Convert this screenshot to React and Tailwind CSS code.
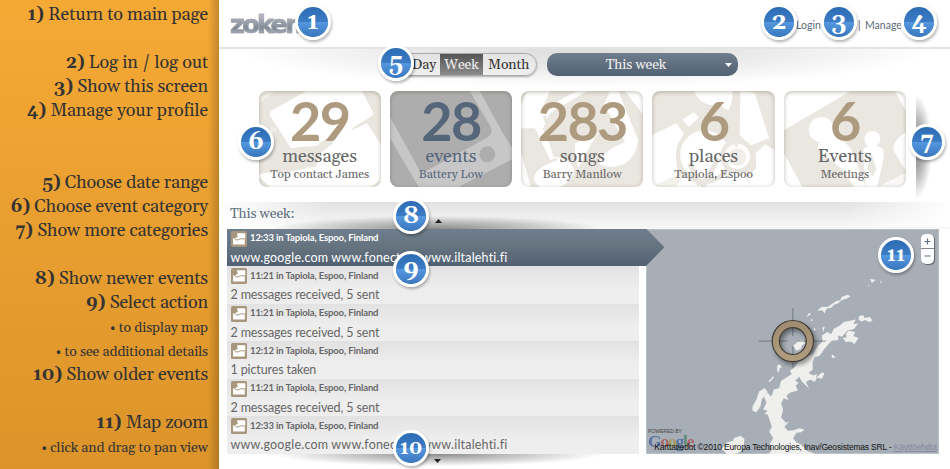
import React from 'react';

const serif = "font-['Gelasio','Georgia','Liberation_Serif',serif]";
const sans = "font-['Lato','Open_Sans',sans-serif]";

const help = [
  ['1)', 'Return to main page'],
  null,
  ['2)', 'Log in / log out'],
  ['3)', 'Show this screen'],
  ['4)', 'Manage your profile'],
  null,
  null,
  ['5)', 'Choose date range'],
  ['6)', 'Choose event category'],
  ['7)', 'Show more categories'],
  null,
  ['8)', 'Show newer events'],
  ['9)', 'Select action'],
  ['•', 'to display map'],
  ['•', 'to see additional details'],
  ['10)', 'Show older events'],
  null,
  ['11)', 'Map zoom'],
  ['•', 'click and drag to pan view'],
];

function Sidebar() {
  return (
    <aside className="h-full w-[219px] shrink-0 bg-linear-to-b from-[#f5a935] to-[#dc942a]">
      <div className="flex h-full flex-col bg-linear-to-l from-black/20 via-transparent via-[5%] to-transparent pt-[3px] pr-[11px] text-right text-[#333]">
        {help.map((h, i) => (
          <div key={i} className="h-6 whitespace-nowrap leading-6">
            {h && h[0] === '•' && <span className="text-[14px] tracking-[-0.1px]">• {h[1]}</span>}
            {h && h[0] !== '•' && (
              <span className="text-[18px] tracking-[-0.16px]">
                <b>{h[0]}</b> {h[1]}
              </span>
            )}
          </div>
        ))}
      </div>
    </aside>
  );
}

function MessagesArt() {
  return (
    <svg className="absolute inset-0 h-full w-full" viewBox="116 18 367 288" preserveAspectRatio="none">
      <rect x="116" y="18" width="367" height="288" fill="#e9e6df" />
      <path d="M152 78 258 18H424L458 80Q461 90 450 96L400 126Q385 150 350 156L310 180 275 184 240 186 212 190 150 94Q146 86 152 78ZM116 268Q150 258 200 262L258 250 262 220 300 200 322 172 348 156 440 115 483 180V306H116Z" fill="#fff" />
      <path d="M256 248 262 215 300 172 350 148 335 178 305 200 286 246ZM483 284 450 306H483ZM116 276 150 306H116Z" fill="#e9e6df" />
      <path d="M116 18H165L116 55Z" fill="#f3f1ec" />
      <path d="M116 185 155 125 168 130 116 230Z" fill="#f4f2ee" opacity=".7" />
    </svg>
  );
}

function PhoneArt() {
  return (
    <svg className="absolute inset-0 h-full w-full" viewBox="510 18 366 288" preserveAspectRatio="none">
      <rect x="510" y="18" width="366" height="288" fill="#adadad" />
      <path d="M510 96 596 252Q604 264 618 258L800 158Q820 146 810 124L748 18H778L846 142 876 190V222L715 306H596L510 160Z" fill="#c7c7c7" />
      <circle cx="801" cy="208" r="24" fill="#adadad" />
    </svg>
  );
}

function SongsArt() {
  return (
    <svg className="absolute inset-0 h-full w-full" viewBox="33 18 367 288" preserveAspectRatio="none">
      <rect x="33" y="18" width="367" height="288" fill="#eae7e0" />
      <path d="M50 18H120L95 75 200 18H232L120 85 98 132 135 215 160 222Q200 240 190 270 180 290 150 306H90Q60 290 78 262 92 238 122 228L75 130H33V60ZM300 18H325L384 165Q380 215 345 235 300 256 268 238 270 200 345 172L282 60ZM345 18H400V90ZM33 200 62 306H33Z" fill="#fff" />
      <path d="M140 222Q90 238 74 262 58 288 84 306" fill="none" stroke="#eae7e0" strokeWidth="8" />
      <path d="M104 92 134 215" stroke="#eae7e0" strokeWidth="9" />
      <path d="M195 175 265 140 225 210 205 248 195 215Z" fill="#fff" />
    </svg>
  );
}

function PlacesArt() {
  return (
    <svg className="absolute inset-0 h-full w-full" viewBox="427 18 367 288" preserveAspectRatio="none">
      <rect x="427" y="18" width="367" height="288" fill="#eae7e0" />
      <g fill="#fff">
        <path d="M553 18Q566 52 600 60L642 65 680 168 652 82Q672 50 668 18ZM692 18 735 23 778 160 722 182 690 150ZM427 150 500 115 522 145 498 215 505 270 427 306ZM518 104 552 82 568 96 538 126ZM738 204 766 178 794 195V306H720L712 276 740 250ZM508 285 550 262 575 306H495Z" />
        <path d="M640 240Q665 262 700 252L720 306H580L600 265Z" />
      </g>
      <circle cx="585" cy="210" r="80" fill="#fff" stroke="#eae7e0" strokeWidth="13" />
      <path d="M540 235 570 300M625 220 580 306" stroke="#eae7e0" strokeWidth="15" />
      <circle cx="683" cy="214" r="45" fill="#fff" stroke="#eae7e0" strokeWidth="14" />
      <path d="M648 72 681 184" stroke="#eae7e0" strokeWidth="9" />
      <circle cx="683" cy="216" r="26" fill="#f1eee9" />
      <path d="M427 306 520 268 500 306Z" fill="#f4f2ed" />
    </svg>
  );
}

function PeopleArt() {
  return (
    <svg className="absolute inset-0 h-full w-full" viewBox="100 18 367 288" preserveAspectRatio="none">
      <rect x="100" y="18" width="367" height="288" fill="#eae7e0" />
      <g fill="#fff">
        <path d="M100 18H300L100 136ZM432 18H467V80ZM100 205 155 306H100ZM467 140Q425 165 428 195L467 260Z" />
        <circle cx="212" cy="134" r="38" />
        <path d="M205 175 250 140 300 190 345 306 305 280 200 190Z" />
        <circle cx="365" cy="162" r="24" />
        <path d="M338 192Q365 170 396 192 404 210 392 250L380 306H345L340 250Z" />
        <path d="M280 260 350 306H310Z" />
        <path d="M380 306 467 262V306Z" opacity=".7" />
      </g>
      <path d="M362 205 350 250 366 275 377 252Z" fill="#eae7e0" />
    </svg>
  );
}

const cards = [
  { n: '29', label: 'messages', sub: 'Top contact James', Art: MessagesArt },
  { n: '28', label: 'events', sub: 'Battery Low', Art: PhoneArt, active: true },
  { n: '283', label: 'songs', sub: 'Barry Manilow', Art: SongsArt },
  { n: '6', label: 'places', sub: 'Tapiola, Espoo', Art: PlacesArt },
  { n: '6', label: 'Events', sub: 'Meetings', Art: PeopleArt },
];

function Card({ n, label, sub, Art, active }) {
  return (
    <div className="relative h-24 w-[122.4px] overflow-hidden rounded-lg">
      <Art />
      <div className="absolute inset-0 rounded-lg shadow-[inset_0_1px_4px_rgba(90,80,60,0.4)]" />
      <div className={'relative flex flex-col items-center whitespace-nowrap ' + (active ? 'text-[#56667a]' : 'text-[#666]')}>
        <div className={'mt-[2px] h-[54px] text-[54px] leading-[55px] font-bold tracking-[-1.6px] ' + sans + (active ? '' : ' text-[#ae9a7e]')}>{n}</div>
        <div className="h-5 text-[18px] leading-5">{label}</div>
        <div className="h-4 text-[12px] leading-[15px]">{sub}</div>
      </div>
    </div>
  );
}

const wide = 'tracking-[0.2px]';
const tight = 'tracking-[-0.12px]';

const rows = [
  ['12:33', 'www.google.com www.fonecta.fi www.iltalehti.fi', wide],
  ['11:21', '2 messages received, 5 sent', tight],
  ['11:21', '2 messages received, 5 sent', tight],
  ['12:12', '1 pictures taken', tight],
  ['11:21', '2 messages received, 5 sent', tight],
  ['12:33', 'www.google.com www.fonecta.fi www.iltalehti.fi', wide],
];

function EnvelopeIcon() {
  return (
    <svg className="h-4 w-4 shrink-0" viewBox="0 0 16 16">
      <rect width="16" height="16" rx="1.5" fill="#a8977c" />
      <path d="M6 2.200h8.300V8H13.800V13.500H2V7H4.500L6.500 5.500Z" fill="#fff" />
      <path d="M2.500 6.800 6 9.200 9.500 7.800H13.800M5.200 3 6.300 6.300" stroke="#a8977c" strokeWidth="1" fill="none" />
    </svg>
  );
}

function Row({ time, text, spacing, selected }) {
  return (
    <div className={'h-[37.5px] pl-1 whitespace-nowrap ' + sans + (selected ? ' w-[438px] bg-linear-to-b from-[#6f7e8d] via-[#65737f] via-50% to-[#526173] text-white [clip-path:polygon(0_0,419.500px_0,100%_50%,419.500px_100%,0_100%)]' : ' w-[412.5px] bg-linear-to-b from-[#e3e2e3] to-[#eee] to-60% text-[#666]')}>
      <div className="flex h-[19px] items-center gap-[3.500px] pt-px">
        <EnvelopeIcon />
        <span className="pb-px text-[9.500px] leading-4 font-bold tracking-[-0.13px]">{time} in Tapiola, Espoo, Finland</span>
      </div>
      <div className={'h-[18px] text-[12.500px] leading-[19px] ' + spacing}>{text}</div>
    </div>
  );
}

function MapPanel() {
  return (
    <div className="relative h-[225.5px] w-[293px] overflow-hidden bg-[#a7aeb6] shadow-[inset_0_0_0_1px_#b8c1c5]">
      <svg className="absolute inset-0 h-full w-full" viewBox="19 25 878 676" preserveAspectRatio="none">
        <defs>
          <filter id="ringShadow" x="-30%" y="-30%" width="170%" height="170%">
            <feDropShadow dx="7" dy="9" stdDeviation="6" floodOpacity=".4" />
          </filter>
          <linearGradient id="ring" x2="0" y2="1">
            <stop stopColor="#a08c70" />
            <stop offset="1" stopColor="#b09c7d" />
          </linearGradient>
        </defs>
        <g fill="#efefed">
          <path d="M648 296 640 310 655 308 642 325 622 330 606 348 594 344 596 358 575 360 552 386 540 404 524 410 518 426 519 446 506 456 520 464 532 460 528 472 545 456 554 457 546 474 532 470 524 484 512 476 498 484 508 503 486 482 478 468 466 480 476 486 468 495 474 509 450 516 440 524 446 538 432 532 424 548 430 566 424 590 438 606 448 602 434 618 444 630 462 628 478 622 494 626 484 634 470 636 460 652 470 665 485 672 500 690 524 698 522 700H386L398 686 390 668 400 652 388 632 396 618 390 600 384 582 374 578 384 570 370 566 380 546 372 526 384 516 394 530 402 506 418 502 424 480 440 470 456 460 450 450 464 440 474 426 520 398 534 376 548 362 546 344 562 334 574 340 582 324 600 314 612 304Z" />
          <path d="M374 502 358 512 350 536 338 558 338 570 350 574 362 556 366 535 384 514ZM658 286 670 283 674 292 690 289 698 300 686 304 676 298 664 302 656 296ZM618 338 626 330 646 334 640 346 656 352 644 370 632 362 618 364 608 352 620 350ZM532 269 546 258 562 259 576 250 590 240 600 239 606 228 624 222 632 227 618 235 606 238 594 248 582 252 576 260 560 264 554 278 548 269ZM500 288 508 276 514 281ZM514 294 520 298 514 302ZM690 175 708 177 702 182 696 187ZM720 180 725 183 724 190ZM684 194 688 192 688 198ZM574 403 580 402 586 412 578 412ZM412 434 420 431 426 440 420 442 416 456 412 450ZM400 466 402 470 390 484 386 482ZM547 320 555 318 550 334ZM522 320 528 326 522 330ZM460 376 476 360 492 358 496 368 486 374 484 384 470 390ZM392 522 400 530 392 536ZM262 665 280 660 282 652 302 645 314 654 312 675 306 690 286 700H262L246 684Z" />
        </g>
        <path d="M459 262V346M459 376V440M357 361H443M474 361H558" stroke="#525a61" strokeWidth="2.500" opacity=".75" />
        <g filter="url(#ringShadow)">
          <circle cx="459" cy="361" r="51" fill="none" stroke="#3f3b35" strokeWidth="25" />
          <circle cx="459" cy="361" r="51" fill="none" stroke="url(#ring)" strokeWidth="18" />
        </g>
      </svg>
      <div className="relative flex h-full flex-col justify-between">
        <div className="mt-[5px] mr-[5px] flex h-[30px] w-[13px] flex-col self-end overflow-hidden rounded-[5px] bg-white shadow-[1px_1px_1px_#666]">
          <svg viewBox="0 0 13 30" className="h-[30px] w-[13px]">
            <path d="M3.500 7.500h6M6.500 4.500v6M3.500 22h6" stroke="#607080" strokeWidth="1.200" />
            <path d="M0 14.500h13" stroke="#888" />
          </svg>
        </div>
        <div className="relative h-[25px] pl-[2px]">
          <div className="font-['Liberation_Sans',sans-serif] text-[5px] leading-[5px] text-[#444]">POWERED BY</div>
          <div className="font-['Liberation_Serif',serif] text-[17.500px] leading-[14px] font-bold tracking-[-1.2px] opacity-80">
            <span className="text-[#45659d]">G</span><span className="text-[#a95656]">o</span><span className="text-[#a39444]">o</span><span className="text-[#45659d]">g</span><span className="text-[#4d8065]">l</span><span className="text-[#a95656]">e</span>
          </div>
          <div className="absolute right-[2px] bottom-0 font-['Liberation_Sans',sans-serif] text-[8.500px] leading-[13px] tracking-[-0.19px] whitespace-nowrap text-[#111]">
            Karttatiedot ©2010 Europa Technologies, Inav/Geosistemas SRL - <span className="text-[#8787a0] underline">Käyttöehdot</span>
          </div>
        </div>
      </div>
    </div>
  );
}

const badges = [
  ['1', 'left-[295px] top-[4px]'],
  ['2', 'left-[761px] top-[4px]'],
  ['3', 'left-[821px] top-[4px]'],
  ['4', 'left-[901px] top-[4px]'],
  ['5', 'left-[378px] top-[45px]'],
  ['6', 'left-[238px] top-[124px]'],
  ['7', 'left-[909px] top-[124px]'],
  ['8', 'left-[393px] top-[198px]'],
  ['9', 'left-[393px] top-[251px]'],
  ['10', 'left-[393px] top-[430px]'],
  ['11', 'left-[878px] top-[237px]'],
];

export default function App() {
  return (
    <div className={'relative flex h-[469px] w-[950px] overflow-hidden bg-white ' + serif}>
      <Sidebar />
      <main className="flex w-[731px] flex-col">
        <header className="flex h-[49px] justify-between border-b-2 border-[#e4e4e4]">
          <div className="ml-[11px] bg-linear-to-b from-[#bcc0c8] from-30% via-[#818996] via-60% to-[#b5bac4] to-75% bg-clip-text pt-[6px] font-['DejaVu_Sans',sans-serif] text-[25.500px] leading-[36px] font-bold tracking-[-2.700px] text-transparent [-webkit-text-stroke:0.600px_#959ca8]">zoken</div>
          <nav className={'mr-[48px] flex pt-[17px] text-[10.500px] leading-4 text-[#5c6b7b] ' + sans}>
            <span className="w-[62px]">Login</span>
            <span className="w-[7px]">|</span>
            <span className="w-[37px]">Manage</span>
          </nav>
        </header>
        <div className="flex h-[42px] bg-[radial-gradient(ellipse_350px_38px_at_50%_0,#dedede_0%,#e6e6e6_40%,#fff_100%)] pt-1">
          <div className="ml-[175px] flex h-[23px] w-[143px] overflow-hidden rounded-full border border-[#aaa] bg-linear-to-b from-[#e3e3e3] to-[#f0f0f0] text-[14px] leading-[22px] tracking-[-0.1px] text-[#333] shadow-[0_1px_2px_rgba(0,0,0,0.3)]">
            <span className="w-[45px] pr-[4px] text-right">Day</span>
            <span className="w-[43px] bg-linear-to-b from-[#555] to-[#8c8c8c] text-center text-[#eee]">Week</span>
            <span className="flex-1 pl-[5px]">Month</span>
          </div>
          <div className="ml-[10px] flex h-[23px] w-[191px] items-center rounded-[10px] bg-linear-to-b from-[#6f7e8d] to-[#526173] pr-[6px] text-[14px] tracking-[-0.15px] text-[#eee]">
            <span className="flex-1 pt-px text-center">This week</span>
            <svg className="h-1 w-[7px]" viewBox="0 0 7 4"><path d="M0 0h7L3.500 4Z" fill="#fff" /></svg>
          </div>
        </div>
        <div className="flex h-[111px] pl-[39.500px]">
          <div className="flex gap-[8.900px]">
            {cards.map((c, i) => <Card key={i} {...c} />)}
          </div>
          <div className="mt-1 ml-[10px] h-[104px] w-5 bg-[radial-gradient(ellipse_16px_52px_at_0_50%,#777_0%,#bbb_55%,#fff_100%)]" />
        </div>
        <div className="flex h-[26.500px] bg-linear-to-b from-[#e2e2e2] to-[#f8f8f8]">
          <div className="flex w-full bg-linear-to-r from-white via-transparent via-15% to-transparent">
            <div className="w-full bg-[radial-gradient(ellipse_165px_13px_at_218px_100%,rgba(110,110,110,0.8),rgba(110,110,110,0.35)_60%,transparent)] pl-[11px] text-[14px] leading-[25px] tracking-[-0.15px] text-[#607080]">
              <div className="flex w-full bg-linear-to-l from-white to-transparent to-15%">
                <span className="w-[64px] whitespace-nowrap">This week:</span>
                <svg className="mt-[17px] ml-[141px] h-1 w-[7px]" viewBox="0 0 7 4"><path d="M0 4h7L3.500 0Z" fill="#222" /></svg>
              </div>
            </div>
          </div>
        </div>
        <div className="flex h-[225.500px] pl-[7.500px]">
          <div className="relative z-10 w-[412.500px] shrink-0">
            {rows.map((r, i) => <Row key={i} time={r[0]} text={r[1]} spacing={r[2]} selected={i === 0} />)}
          </div>
          <div className="ml-[7px]"><MapPanel /></div>
        </div>
        <div className="flex h-[15px] bg-[radial-gradient(ellipse_165px_12px_at_218px_0,rgba(100,100,100,0.75),transparent)] pt-[5px] pl-[215px]">
          <svg className="h-1 w-[7px]" viewBox="0 0 7 4"><path d="M0 0h7L3.500 4Z" fill="#222" /></svg>
        </div>
      </main>
      {badges.map(([n, pos]) => (
        <div key={n} className={'absolute z-20 flex h-9 w-9 items-center justify-center rounded-full border-3 border-white bg-linear-to-b from-[#2c6cb5] from-0% via-[#3c7cc4] via-50% to-[#4584cc] text-[24px] leading-none font-bold text-white shadow-[1px_2px_3px_rgba(0,0,0,0.3)] ' + pos}>
          <span className="absolute inset-x-0 bottom-0 h-[15px] rounded-b-full bg-linear-to-b from-[#5598e1] to-[#3977bd]" />
          <span className={n.length > 1 ? 'relative text-[19px]' : 'relative'}>{n}</span>
        </div>
      ))}
    </div>
  );
}
